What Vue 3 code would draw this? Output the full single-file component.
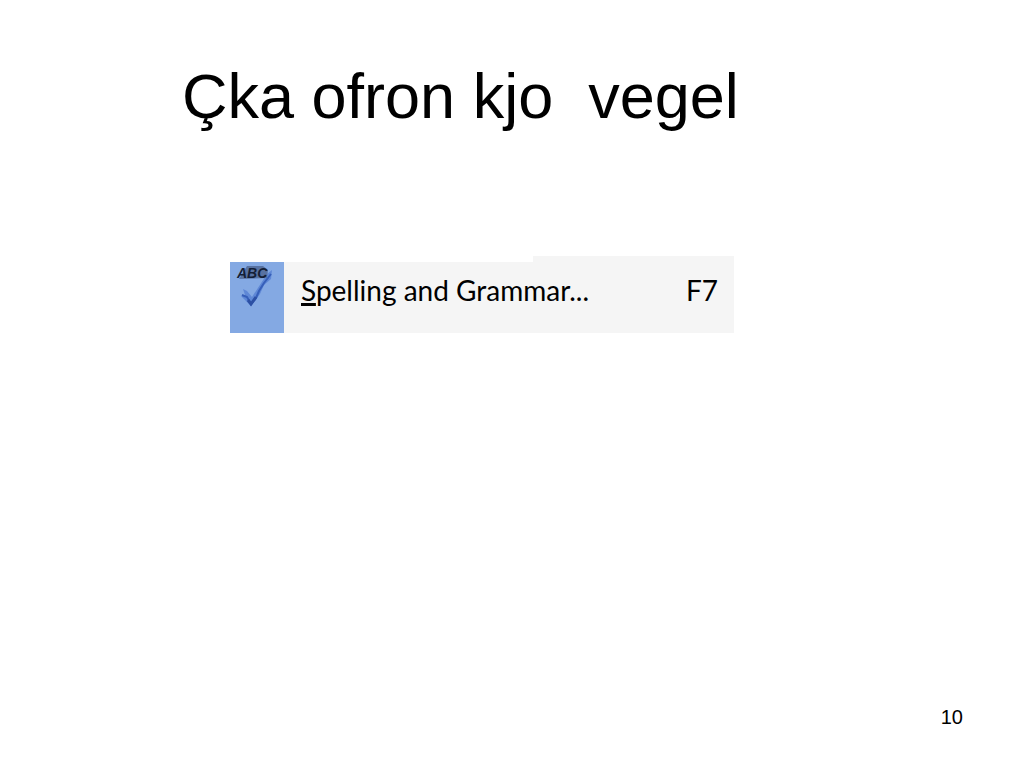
<script setup>
const title = 'Çka ofron kjo  vegel'
const page = 10
</script>

<template>
  <main class="slide">
    <h1 class="title">{{ title }}</h1>
    <button class="menu-item" type="button" aria-keyshortcuts="F7">
      <span class="icon-cell">
        <svg class="icon" width="54" height="71" viewBox="0 0 54 71" aria-hidden="true">
          <path d="M13 27 L17 29 L22 35 L37 12 L42 8 L41 17 L34 23 L30 32 L25 39 L21 44 L17 40 L11 34 L15 33 Z" fill="#5f88d6" />
          <path d="M12 33 L17 35 L21 42 L26 36 L29 29 L34 21 L41 12" fill="none" stroke="#365fb9" stroke-width="2" />
          <path d="M18 38 L21 42 L26 35" fill="none" stroke="#2c50a4" stroke-width="3" />
          <path d="M9 17 L17 4 L33 4 L38 8 L37 16 Z" fill="#5872a2" />
          <text x="7" y="16" class="abc">ABC</text>
        </svg>
      </span>
      <span class="label"><span class="key">S</span>pelling and Grammar...</span>
      <span class="shortcut">F7</span>
    </button>
    <footer class="page-number">{{ page }}</footer>
  </main>
</template>

<style>
body {
  margin: 0;
  background: #fff;
}
</style>

<style scoped>
.slide {
  display: flex;
  flex-direction: column;
  min-height: 100vh;
  box-sizing: border-box;
  padding: 60px 61px 39px 182px;
  background: #fff;
  color: #000;
  font-family: "Liberation Sans", Arial, sans-serif;
}
.title {
  margin: 0;
  font-size: 63px;
  line-height: 72px;
  font-weight: 400;
  white-space: pre;
}
.menu-item {
  display: flex;
  align-items: stretch;
  align-self: flex-start;
  width: 504px;
  max-width: 100%;
  margin: 124px 0 0 48px;
  padding: 6px 16px 0 0;
  border: 0;
  background:
    linear-gradient(#f5f5f5, #f5f5f5) right top / 201px 100% no-repeat,
    linear-gradient(#f5f5f5, #f5f5f5) left 6px / 100% 100% no-repeat;
  color: #000;
  font-family: Lato, "Open Sans", sans-serif;
  font-size: 28px;
  line-height: 36px;
  text-align: left;
}
.icon-cell {
  flex: none;
  background: #84a9e3;
}
.icon {
  display: block;
}
.abc {
  font-family: "Liberation Sans", Arial, sans-serif;
  font-size: 14px;
  font-weight: 700;
  font-style: italic;
  fill: #141f36;
}
.label {
  flex: 1;
  padding: 10px 0 0 17px;
  white-space: nowrap;
}
.key {
  text-decoration: underline;
  text-decoration-thickness: 3px;
  text-underline-offset: 2px;
}
.shortcut {
  padding-top: 10px;
}
.page-number {
  margin-top: auto;
  align-self: flex-end;
  font-size: 20px;
  line-height: 24px;
}
</style>
